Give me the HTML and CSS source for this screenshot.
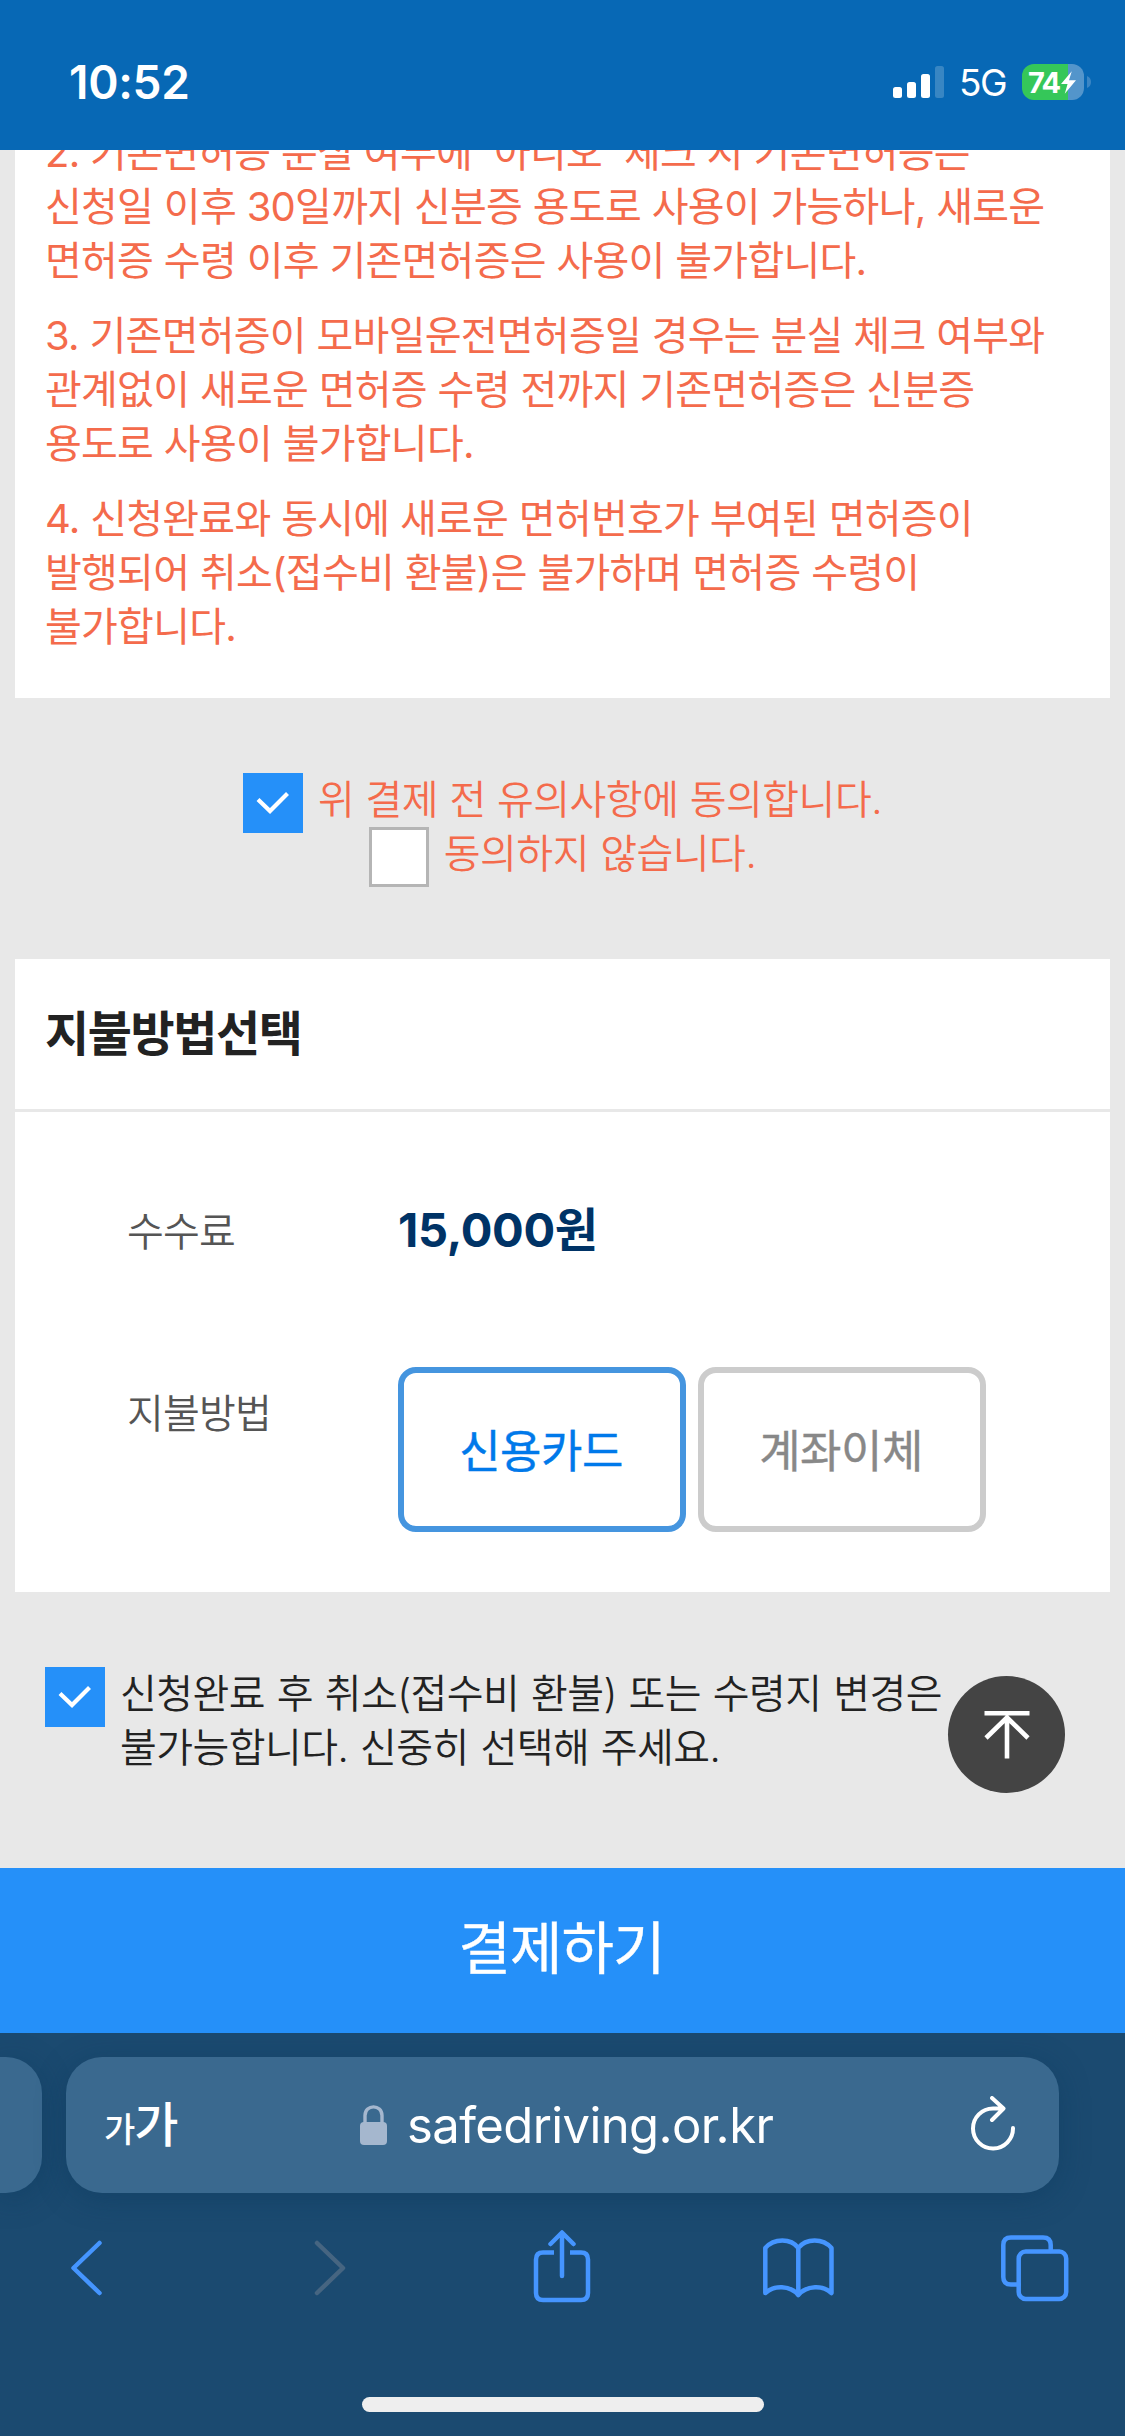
FILE: index.html
```html
<!DOCTYPE html>
<html lang="ko">
<head>
<meta charset="utf-8">
<title>결제하기</title>
<link rel="stylesheet" href="styles.css">
</head>
<body>
<header class="status">
  <div class="clock">10:52</div>
  <div class="indicators">
    <svg class="signal" width="52" height="32" viewBox="0 0 52 32" fill="#fff"><rect x="0" y="21" width="9" height="11" rx="2.5"/><rect x="14" y="16" width="9" height="16" rx="2.5"/><rect x="28" y="8" width="9" height="24" rx="2.5"/><rect x="42" y="0" width="9" height="32" rx="2.5" opacity=".2"/></svg>
    <span class="network">5G</span>
    <div class="battery"><span>74</span><svg width="15" height="23" viewBox="0 0 16 24"><path d="M11.500 0 0 13.500H7L4 24 16 9.500H8.500Z" fill="#fff"/></svg></div>
    <svg class="battery-tip" width="4" height="12" viewBox="0 0 4 12"><path d="M0 0Q4 1.500 4 6T0 12Z" fill="#3b86c4"/></svg>
  </div>
</header>
<main class="page">
  <section class="notice">
    <p><span>2. 기존면허증 분실 여부에 '아니오' 체크 시 기존면허증은</span><span>신청일 이후 30일까지 신분증 용도로 사용이 가능하나, 새로운</span><span>면허증 수령 이후 기존면허증은 사용이 불가합니다.</span></p>
    <p><span>3. 기존면허증이 모바일운전면허증일 경우는 분실 체크 여부와</span><span>관계없이 새로운 면허증 수령 전까지 기존면허증은 신분증</span><span>용도로 사용이 불가합니다.</span></p>
    <p><span>4. 신청완료와 동시에 새로운 면허번호가 부여된 면허증이</span><span>발행되어 취소(접수비 환불)은 불가하며 면허증 수령이</span><span>불가합니다.</span></p>
  </section>
  <section class="agree">
    <label class="choice"><i class="box checked"><svg width="34" height="24" viewBox="0 0 34 24"><path d="M2 8.500 14 20 31.500 2.500" fill="none" stroke="#fff" stroke-width="4.200"/></svg></i><span>위 결제 전 유의사항에 동의합니다.</span></label>
    <label class="choice"><i class="box"></i><span>동의하지 않습니다.</span></label>
  </section>
  <section class="payment">
    <h2>지불방법선택</h2>
    <dl class="fee"><dt>수수료</dt><dd>15,000원</dd></dl>
    <dl class="method"><dt>지불방법</dt><dd><button class="selected">신용카드</button><button>계좌이체</button></dd></dl>
  </section>
  <section class="confirm">
    <i class="box checked"><svg width="34" height="24" viewBox="0 0 34 24"><path d="M2 8.500 14 20 31.500 2.500" fill="none" stroke="#fff" stroke-width="4.200"/></svg></i>
    <p><span>신청완료 후 취소(접수비 환불) 또는 수령지 변경은</span><span>불가능합니다. 신중히 선택해 주세요.</span></p>
    <div class="to-top"><svg width="46" height="50" viewBox="0 0 46 50" fill="none" stroke="#fff" stroke-width="4.600"><path d="M.5 4.200H45.500M23 49.500V8M2 29 23 8.500 44 29"/></svg></div>
  </section>
  <div class="pay">결제하기</div>
</main>
<footer class="browser">
  <div class="tabs">
    <div class="previous"></div>
    <div class="address">
      <div class="textsize"><small>가</small>가</div>
      <div class="url"><svg width="28" height="40" viewBox="0 0 28 40"><path d="M5 18V10.500C5-1 22-1 22 10.500V18" fill="none" stroke="#a5b7ce" stroke-width="3.400"/><rect x="0" y="17" width="27" height="23" rx="4" fill="#a5b7ce"/></svg><span>safedriving.or.kr</span></div>
      <svg class="reload" width="48" height="58" viewBox="0 0 48 58" fill="none" stroke="#fff" stroke-width="4" stroke-linecap="round" stroke-linejoin="round"><path d="M35 12.500H25A20 20 0 1 0 45 32M24 2 35.500 12.500 24 24"/></svg>
    </div>
  </div>
  <nav class="toolbar">
    <svg width="34" height="58" viewBox="0 0 34 58" class="back"><path d="M29.500 4 3.500 29 29.500 54"/></svg>
    <svg width="34" height="58" viewBox="0 0 34 58" class="forward"><path d="M4 4 30 29 4 54"/></svg>
    <svg width="58" height="74" viewBox="0 0 58 74" class="share"><path stroke-linecap="butt" d="M21 22.500H10Q3 22.500 3 29.500V63Q3 70 10 70H48Q55 70 55 63V29.500Q55 22.500 48 22.500H37"/><path d="M29 46V3M17.500 14 29 2.500 40.500 14"/></svg>
    <svg width="72" height="62" viewBox="0 0 72 62" class="book"><path d="M35.300 58V11C28 1 11 1 2.300 11V56C11 48 27 48 35.300 58C44 48 60 48 68.500 56V11C60 1 43 1 35.300 11"/></svg>
    <svg width="69" height="68" viewBox="0 0 69 68" class="pages"><path d="M17.700 50.500H10Q2.300 50.500 2.300 43V11Q2.300 3.500 10 3.500H42Q49.700 3.500 49.700 11V17"/><rect x="17.700" y="17.500" width="47.500" height="47.500" rx="7"/></svg>
  </nav>
  <div class="home"></div>
</footer>
</body>
</html>
```
FILE: styles.css
```css
* { box-sizing: border-box; }
body { margin: 0; width: 1125px; height: 2436px; overflow: hidden; background: #e8e8e8; font-family: Inter, "Noto Sans CJK KR", sans-serif; display: flex; flex-direction: column; }
svg { display: block; flex: none; }
i { display: block; flex: none; }
.status { height: 150px; flex: none; background: #0768b5; color: #fff; display: flex; justify-content: space-between; padding: 56px 34px 0 69px; }
.clock { font-size: 46px; line-height: 52px; font-weight: 600; letter-spacing: -0.3px; }
.indicators { display: flex; align-items: flex-start; }
.signal { margin-top: 10px; }
.network { font-size: 37px; line-height: 54px; margin-left: 14px; width: 63px; letter-spacing: -1.6px; }
.battery { width: 62px; height: 36px; margin-top: 8px; border-radius: 12px; background: linear-gradient(90deg, #35c759 46px, #5395cb 46px); display: flex; align-items: center; font-size: 29px; font-weight: 700; padding-left: 6px; letter-spacing: -1.8px; gap: 2px; }
.battery-tip { margin: 20px 0 0 3px; }
.page { flex: none; height: 1883px; }
.notice { margin: 0 15px; height: 548px; background: #fff; color: #f46b4c; font-size: 40px; font-weight: 390; line-height: 54px; letter-spacing: -0.75px; word-spacing: 0.2px; padding: 0 30px; overflow: hidden; white-space: nowrap; }
.notice p { margin: 0 0 21px; }
.notice p:first-child { margin-top: -24px; }
.notice span, .confirm span { display: block; }
.agree { height: 261px; padding-top: 75px; color: #f46b4c; font-size: 40px; font-weight: 350; letter-spacing: -0.5px; word-spacing: 0.5px; line-height: 54px; display: flex; flex-direction: column; align-items: center; }
.choice { height: 54px; display: flex; align-items: flex-start; gap: 15px; white-space: nowrap; }
.box { width: 60px; height: 60px; background: #fff; border: 3px solid #b5b5b5; }
.box.checked { background: #2590f9; border: 0; display: flex; align-items: center; justify-content: center; }
.payment { margin: 0 15px; height: 633px; background: #fff; }
h2 { margin: 0; height: 153px; border-bottom: 3px solid #e8e8e8; padding: 0 30px; line-height: 149px; font-size: 48px; font-weight: 700; letter-spacing: -1.4px; color: #222; }
dl { margin: 0; display: flex; padding-left: 112px; }
dt { width: 271px; font-size: 40px; font-weight: 350; line-height: 54px; letter-spacing: -0.8px; color: #555; }
dd { margin: 0; display: flex; gap: 12px; }
.fee { padding-top: 93px; height: 255px; }
.fee dd { font-size: 47px; font-weight: 650; line-height: 50px; color: #003366; letter-spacing: -0.3px; }
.method dt { padding-top: 20px; }
button { width: 288px; height: 165px; background: #fff; border: 6px solid #ccc; border-radius: 18px; padding: 0 2px 3px 0; font: 400 45px "Noto Sans CJK KR", sans-serif; letter-spacing: -0.5px; color: #888; -webkit-text-stroke: 0.4px; }
button.selected { border-color: #4595df; color: #0079ea; }
.confirm { height: 276px; padding: 75px 0 0 45px; display: flex; color: #222; font-size: 40px; font-weight: 350; line-height: 54px; letter-spacing: -0.55px; word-spacing: 1px; white-space: nowrap; }
.confirm p { margin: 0 0 0 15px; width: 828px; }
.to-top { width: 117px; height: 117px; border-radius: 50%; background: #444; display: flex; justify-content: center; padding-top: 33px; margin-top: 9px; }
.pay { height: 165px; background: #2590f9; color: #fff; text-align: center; font-size: 57px; font-weight: 400; line-height: 161px; letter-spacing: -1px; padding-right: 2px; -webkit-text-stroke: 0.4px; }
.browser { flex: 1; background: #1b4a70; overflow: hidden; display: flex; flex-direction: column; }
.tabs { display: flex; gap: 24px; padding-top: 24px; height: 198px; flex: none; }
.previous { width: 42px; height: 136px; background: #3a698f; border-radius: 0 36px 36px 0; box-shadow: 0 6px 30px #0b365a66; }
.address { width: 993px; height: 136px; background: #3a698f; border-radius: 36px; color: #fff; display: flex; align-items: center; padding: 0 43px 0 38px; box-shadow: 0 6px 30px #0b365a66; }
.textsize { width: 84px; font-size: 48px; font-weight: 500; letter-spacing: -1px; line-height: 60px; padding-top: 4px; white-space: nowrap; }
.textsize small { font-size: 34px; font-weight: 500; }
.url { display: flex; align-items: center; gap: 19px; font-size: 49px; letter-spacing: -0.6px; margin-left: 172px; }
.reload { margin-left: auto; }
.toolbar { display: flex; height: 74px; align-items: center; padding-left: 70px; fill: none; stroke: #4595ff; stroke-width: 4.500; stroke-linecap: round; stroke-linejoin: round; }
.forward { stroke: #466581; margin-left: 209px; }
.share { margin: -2px 0 0 186px; }
.book { margin-left: 172px; }
.pages { margin-left: 166px; }
.home { width: 402px; height: 15px; background: #eee; border-radius: 8px; margin: 92px auto 0; }
```
